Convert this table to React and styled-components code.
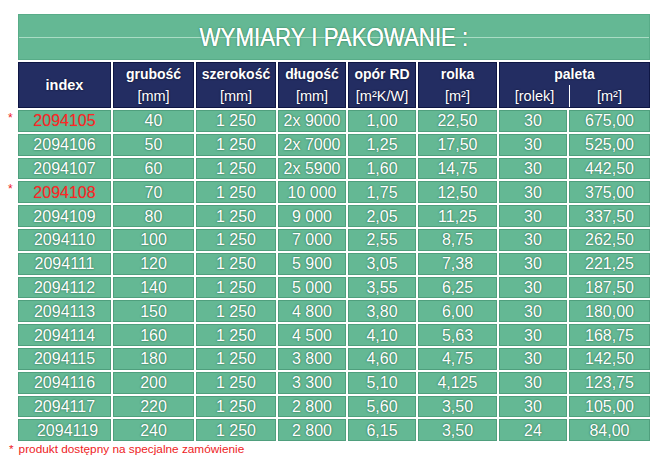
import React from "react";
import styled, { createGlobalStyle } from "styled-components";

const Global = createGlobalStyle`
  html, body { margin: 0; padding: 0; background: #ffffff; }
  body { font-family: "Liberation Sans", Arial, sans-serif; }
`;

const Page = styled.div`
  width: 663px;
  height: 463px;
  padding-top: 14px;
  box-sizing: border-box;
  overflow: hidden;
`;

const TitleBand = styled.div`
  position: relative;
  margin-left: 18px;
  width: 632px;
  height: 46px;
  box-sizing: border-box;
  background: #64b894;
  border: 1px solid #58ac88;
  display: flex;
  align-items: center;
  justify-content: center;
  &::before {
    content: "";
    position: absolute;
    left: 0;
    right: 0;
    top: 22px;
    height: 1px;
    background: #a9dcc4;
  }
`;

const TitleText = styled.h1`
  position: relative;
  margin: 0;
  font-family: "Liberation Sans", Arial, sans-serif;
  font-weight: 400;
  font-size: 25px;
  letter-spacing: 0;
  color: #ffffff;
  transform: scaleX(0.89);
  text-shadow: 0 0 0.4px #ffffff, 0 0 2px rgba(20, 80, 50, 0.7);
`;

const Table = styled.table`
  margin-left: 16px;
  width: 636px;
  table-layout: fixed;
  border-collapse: separate;
  border-spacing: 2px;
  font-family: "Liberation Sans", Arial, sans-serif;
`;

const HeadCell = styled.th`
  height: 46px;
  box-sizing: border-box;
  padding: 0;
  background: #232d62;
  border: 1px solid #0e1644;
  color: #ffffff;
  font-weight: 700;
  font-size: 14.5px;
  text-align: center;
  vertical-align: middle;
  text-shadow: 0 0 2px rgba(0, 0, 20, 0.8);
`;

const HeadStack = styled.div`
  display: flex;
  flex-direction: column;
  align-items: center;
`;

const HeadLine = styled.span`
  display: block;
  line-height: 22px;
  height: 22px;
  font-weight: ${(p) => (p.$unit ? 400 : 700)};
  font-size: ${(p) => (p.$unit ? "14.5px" : "14px")};
`;

const SplitRow = styled.div`
  display: flex;
  width: 100%;
`;

const SplitPart = styled.span`
  flex: ${(p) => (p.$w ? `0 0 ${p.$w}px` : "1 1 auto")};
  line-height: 22px;
  height: 22px;
  font-weight: 400;
  font-size: 14.5px;
  text-align: center;
  border-right: ${(p) => (p.$divider ? "1px solid #ffffff" : "none")};
`;

const Row = styled.tr`
  height: 21.8px;
`;

const Cell = styled.td`
  position: relative;
  height: 21.8px;
  box-sizing: border-box;
  padding: 0 0 0 ${(p) => (p.$nudge ? "6px" : "0")};
  background: #64b894;
  border: 1px solid #4f9f7d;
  color: ${(p) => (p.$red ? "#ff2626" : "#ffffff")};
  font-size: 16px;
  line-height: 19px;
  text-align: center;
  vertical-align: middle;
  white-space: nowrap;
  text-shadow: ${(p) =>
    p.$red ? "0 0 1px rgba(120, 40, 40, 0.35)" : "0 0 2px rgba(10, 70, 40, 0.8)"};
`;

const Star = styled.span`
  position: absolute;
  left: -11px;
  top: 1px;
  font-size: 12px;
  line-height: 12px;
  color: #ee1c24;
  text-shadow: none;
`;

const Footnote = styled.div`
  margin-top: -1px;
  margin-left: 9px;
  font-family: "Liberation Sans", Arial, sans-serif;
  font-size: 11.8px;
  line-height: 14px;
  color: #ee1c24;
  display: flex;
  gap: 5px;
`;

const widths = [93, 81, 80, 68, 68, 79, 68, 81];

const rows = [
  ["2094105", "40", "1 250", "2x 9000", "1,00", "22,50", "30", "675,00", true],
  ["2094106", "50", "1 250", "2x 7000", "1,25", "17,50", "30", "525,00"],
  ["2094107", "60", "1 250", "2x 5900", "1,60", "14,75", "30", "442,50"],
  ["2094108", "70", "1 250", "10 000", "1,75", "12,50", "30", "375,00", true],
  ["2094109", "80", "1 250", "9 000", "2,05", "11,25", "30", "337,50"],
  ["2094110", "100", "1 250", "7 000", "2,55", "8,75", "30", "262,50"],
  ["2094111", "120", "1 250", "5 900", "3,05", "7,38", "30", "221,25"],
  ["2094112", "140", "1 250", "5 000", "3,55", "6,25", "30", "187,50"],
  ["2094113", "150", "1 250", "4 800", "3,80", "6,00", "30", "180,00"],
  ["2094114", "160", "1 250", "4 500", "4,10", "5,63", "30", "168,75"],
  ["2094115", "180", "1 250", "3 800", "4,60", "4,75", "30", "142,50"],
  ["2094116", "200", "1 250", "3 300", "5,10", "4,125", "30", "123,75"],
  ["2094117", "220", "1 250", "2 800", "5,60", "3,50", "30", "105,00"],
  ["2094119", "240", "1 250", "2 800", "6,15", "3,50", "24", "84,00", false, true],
];

const heads = [
  ["grubość", "[mm]"],
  ["szerokość", "[mm]"],
  ["długość", "[mm]"],
  ["opór RD", "[m²K/W]"],
  ["rolka", "[m²]"],
];

export default function App() {
  return (
    <Page>
      <Global />
      <TitleBand>
        <TitleText>WYMIARY I PAKOWANIE :</TitleText>
      </TitleBand>
      <Table>
        <colgroup>
          {widths.map((w, i) => (
            <col key={i} style={{ width: w }} />
          ))}
        </colgroup>
        <thead>
          <tr>
            <HeadCell>index</HeadCell>
            {heads.map(([a, b]) => (
              <HeadCell key={a}>
                <HeadStack>
                  <HeadLine>{a}</HeadLine>
                  <HeadLine $unit>{b}</HeadLine>
                </HeadStack>
              </HeadCell>
            ))}
            <HeadCell colSpan={2}>
              <HeadStack>
                <HeadLine>paleta</HeadLine>
                <SplitRow>
                  <SplitPart $w={69} $divider>[rolek]</SplitPart>
                  <SplitPart>[m²]</SplitPart>
                </SplitRow>
              </HeadStack>
            </HeadCell>
          </tr>
        </thead>
        <tbody>
          {rows.map((r) => (
            <Row key={r[0]}>
              {r.slice(0, 8).map((v, i) => (
                <Cell key={i} $red={i === 0 && r[8]} $nudge={i === 0 && r[9]}>
                  {i === 0 && r[8] ? <Star>*</Star> : null}
                  {v}
                </Cell>
              ))}
            </Row>
          ))}
        </tbody>
      </Table>
      <Footnote>
        <span>*</span>
        <span>produkt dostępny na specjalne zamówienie</span>
      </Footnote>
    </Page>
  );
}
